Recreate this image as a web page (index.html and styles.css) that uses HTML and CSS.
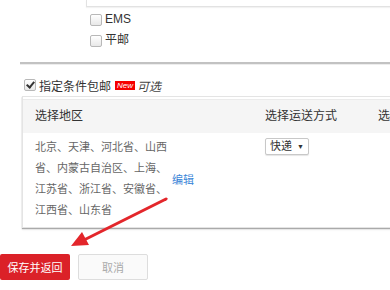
FILE: index.html
```html
<!DOCTYPE html>
<html>
	<head>
		<meta charset="UTF-8">
		<title>运费模板</title>
		<link rel="stylesheet" href="styles.css">
	</head>
	<body>
		<div class="page">
			<div class="topBox"></div>
			<ul class="wayList">
				<li><span class="chk"></span>EMS</li>
				<li><span class="chk"></span>平邮</li>
			</ul>
			<div class="divider"></div>
			<div class="freeRow">
				<span class="chk checked"></span>指定条件包邮
				<span class="newTag">New</span>
				<em class="optional">可选</em>
			</div>
			<div class="condTable">
				<div class="thead">
					<div class="th col1">选择地区</div>
					<div class="th col2">选择运送方式</div>
					<div class="th col3">选择快递</div>
				</div>
				<div class="tbody">
					<div class="td col1">
						<p class="areaText">北京、天津、河北省、山西省、内蒙古自治区、上海、江苏省、浙江省、安徽省、江西省、山东省</p>
						<a class="editLink" href="#">编辑</a>
					</div>
					<div class="td col2">
						<span class="fakeSelect">快递 <i>▼</i></span>
					</div>
					<div class="td col3"></div>
				</div>
			</div>
			<div class="btnRow">
				<button class="btnSave">保存并返回</button>
				<button class="btnCancel">取消</button>
			</div>
			<!-- 标注箭头 -->
			<svg class="arrow" width="390" height="290" viewBox="0 0 390 290">
				<line x1="166" y1="199" x2="84" y2="240" stroke="#e3262b" stroke-width="3" stroke-linecap="round"/>
				<polygon points="71,246 82,232 89,245" fill="#e3262b"/>
			</svg>
		</div>
	</body>
</html>
```

FILE: styles.css
```css
body, div, ul, p{
	margin: 0;
	padding: 0;
}
html, body{
	width: 100%;
	height: 100%;
	overflow: hidden;
	background: #FFF;
}
body{
	font-family: "Liberation Sans", "Noto Sans CJK SC", sans-serif;
	font-size: 12px;
	color: #333;
}
li{
	list-style: none;
}
a{
	text-decoration: none;
}
.page{
	position: relative;
	width: 390px;
	height: 290px;
}
.topBox{
	height: 6px;
	margin-left: 86px;
	border-left: solid 1px #E2E2E2;
	border-bottom: solid 1px #E2E2E2;
	box-shadow: 0 1px 1px #F2F2F2;
}
.wayList{
	padding: 2px 0 0 90px;
}
.wayList li{
	height: 21px;
	line-height: 21px;
	display: flex;
	align-items: center;
	color: #333;
	font-size: 12px;
}
.chk{
	width: 10px;
	height: 10px;
	border: solid 1px #B8B8B8;
	border-radius: 2px;
	background: linear-gradient(#FFF, #E8E8E8);
	margin-right: 3px;
	display: inline-block;
	position: relative;
	flex: none;
}
.chk.checked::after{
	content: "";
	position: absolute;
	left: 3px;
	top: 0;
	width: 3px;
	height: 6px;
	border: solid #333;
	border-width: 0 2px 2px 0;
	transform: rotate(40deg);
}
.divider{
	margin: 11px 0 0 20px;
	height: 2px;
	background: #C2C2C2;
	border-bottom: solid 1px #EDEDED;
}
.freeRow{
	margin: 10px 0 0 24px;
	height: 20px;
	display: flex;
	align-items: center;
	font-size: 12px;
	color: #333;
}
.newTag{
	margin-left: 4px;
	height: 9px;
	line-height: 9px;
	padding: 0 2px;
	background: #F50000;
	color: #FFF;
	font-size: 8px;
	font-style: italic;
}
.optional{
	margin-left: 2px;
	font-size: 12px;
	color: #444;
}
.condTable{
	margin: 1px 0 0 22px;
	width: 430px;
	border: solid 1px #E4E4E4;
	box-shadow: 0 1px 1px #AAA, 0 2px 2px #EEE;
}
.thead{
	display: grid;
	grid-template-columns: 242px 113px 1fr;
	height: 33px;
	margin-top: 2px;
	background: #F5F5F5;
	border-top: solid 1px #EBEBEB;
}
.th{
	line-height: 33px;
	color: #333;
	font-size: 12px;
}
.th.col1{
	padding-left: 12px;
}
.tbody{
	display: grid;
	grid-template-columns: 242px 113px 1fr;
	padding: 4px 0 6px;
}
.td.col1{
	padding-left: 12px;
	display: flex;
	align-items: center;
}
.areaText{
	width: 132px;
	font-size: 11px;
	line-height: 21px;
	color: #666;
	word-break: break-all;
}
.editLink{
	margin-left: 5px;
	font-size: 11px;
	color: #3B86D8;
}
.fakeSelect{
	display: inline-block;
	margin-top: 1px;
	height: 15px;
	line-height: 15px;
	padding: 0 4px;
	border: solid 1px #C8C8C8;
	border-radius: 2px;
	background: #FFF;
	box-shadow: 0 1px 1px #E5E5E5;
	font-size: 11px;
	color: #333;
}
.fakeSelect i{
	font-style: normal;
	font-size: 7px;
	margin-left: 2px;
	vertical-align: top;
}
.btnRow{
	margin-top: 26px;
	display: flex;
	gap: 8px;
}
.btnRow button{
	width: 70px;
	height: 26px;
	font-family: "Liberation Sans", "Noto Sans CJK SC", sans-serif;
	font-size: 11px;
	border: none;
	outline: none;
	border-radius: 2px;
	padding: 0;
}
.btnSave{
	background: #DB2128;
	color: #FFF;
}
.btnCancel{
	background: #FAFAFA;
	color: #AAA;
	border: solid 1px #DDD !important;
}
.arrow{
	position: absolute;
	left: 0;
	top: 0;
	pointer-events: none;
}
```
